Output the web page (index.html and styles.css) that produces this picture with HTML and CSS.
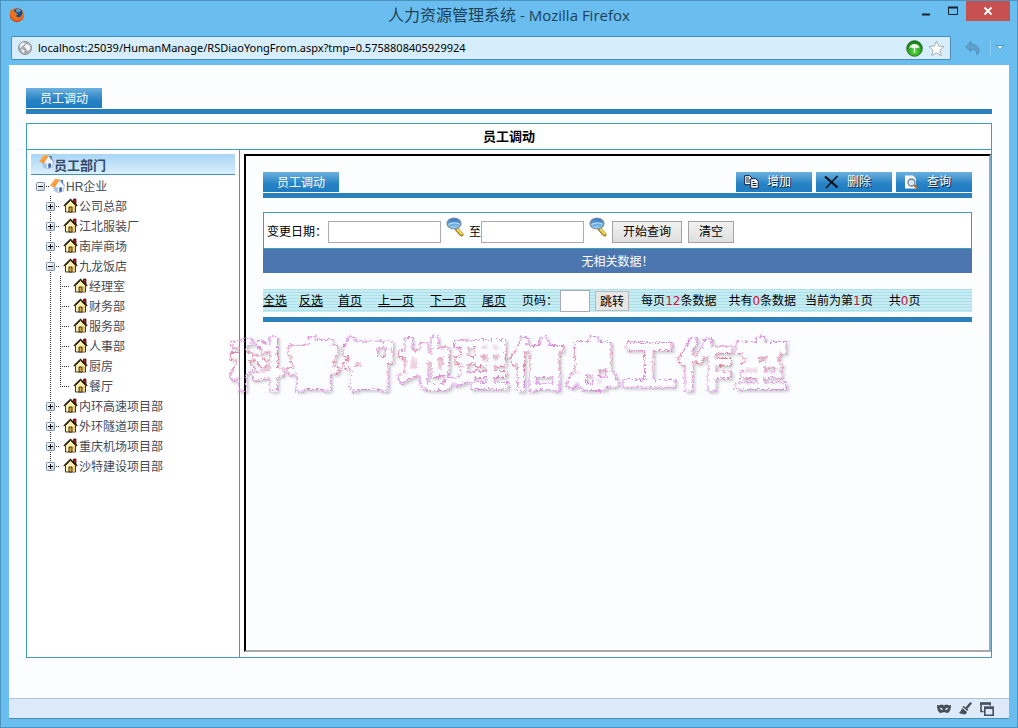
FILE: index.html
```html
<!DOCTYPE html>
<html lang="zh-CN">
<head>
  <meta charset="UTF-8" />
  <meta name="viewport" content="width=device-width, initial-scale=1.0"/>
  <title>人力资源管理系统</title>
  <link rel="stylesheet" href="styles.css">
</head>
<body>
  <svg class="defs" aria-hidden="true">
    <defs>
      <linearGradient id="orange" x1="0" y1="0" x2="1" y2="1">
        <stop offset="0" stop-color="#ffc070"/><stop offset="1" stop-color="#f07c10"/>
      </linearGradient>
      <linearGradient id="lens" x1="0" y1="0" x2="0" y2="1">
        <stop offset="0" stop-color="#2f6fb4"/><stop offset=".5" stop-color="#5ba3dc"/><stop offset="1" stop-color="#a5d8f5"/>
      </linearGradient>
      <linearGradient id="box" x1="0" y1="0" x2="1" y2="1">
        <stop offset="0" stop-color="#fff"/><stop offset="1" stop-color="#c3cad6"/>
      </linearGradient>
      <radialGradient id="green" cx=".5" cy=".7" r=".7">
        <stop offset="0" stop-color="#5be03c"/><stop offset="1" stop-color="#07780c"/>
      </radialGradient>
      <radialGradient id="fox" cx=".6" cy=".3" r=".8">
        <stop offset="0" stop-color="#ffb02e"/><stop offset=".6" stop-color="#e8601a"/><stop offset="1" stop-color="#b3270c"/>
      </radialGradient>

      <symbol id="i-house" viewBox="0 0 15 15">
        <path d="M10.500 1h2.500v6l-2.500-2.500z" fill="#a02020" stroke="#4a1010" stroke-width=".8"/>
        <path d="M2.500 7.500 7.500 2.500l5 5v6.500h-10z" fill="#fff0b0" stroke="#2a2010" stroke-width=".9"/>
        <path d="M9.500 8h2.500v5.500H9.500z" fill="#f3cf6c"/>
        <path d="M6 9h3v5H6z" fill="#d9b04a" stroke="#2a2010" stroke-width=".9"/>
        <path d="M.8 8 7.500 1.400 14.200 8" fill="none" stroke="#2a1c10" stroke-width="1.300"/>
      </symbol>

      <symbol id="i-home" viewBox="0 0 15 15">
        <path d="M4 7 9.500 2.200 14.200 7.500l-.7 5.500-5 1.800L4 12.500z" fill="#f3f7fd" stroke="#8fa6c8" stroke-width=".7"/>
        <path d="M4.200 8 8 9.800v4.600l-3.800-2z" fill="#a9c6ee"/>
        <path d="M9.300 9.500h2.600v3.800l-2.600.8z" fill="#2f61a8"/>
        <path d="M11 2h2v4l-2-1.800z" fill="#4a78b8"/>
        <path d="M0 7.500 5 .8 10 1.600 4.600 9.500z" fill="url(#orange)"/>
        <path d="M10 1.600 14.800 7.800" stroke="#7d9cc8" stroke-width="1"/>
      </symbol>

      <symbol id="i-plus" viewBox="0 0 9 9">
        <rect x=".5" y=".5" width="8" height="8" rx="1" fill="url(#box)" stroke="#7b8ea8"/>
        <path d="M2 4.500h5M4.500 2v5" stroke="#000"/>
      </symbol>

      <symbol id="i-minus" viewBox="0 0 9 9">
        <rect x=".5" y=".5" width="8" height="8" rx="1" fill="url(#box)" stroke="#7b8ea8"/>
        <path d="M2 4.500h5" stroke="#000"/>
      </symbol>

      <symbol id="i-lens" viewBox="0 0 18 20">
        <path d="M11 12.500 15.500 17.500" stroke="#9a7a1c" stroke-width="4" stroke-linecap="round"/>
        <path d="M11.500 12.500 15.500 17" stroke="#f3d95a" stroke-width="2.200" stroke-linecap="round"/>
        <ellipse cx="8" cy="6.500" rx="7" ry="5.500" fill="url(#lens)" stroke="#7c8b99" stroke-width="1.200"/>
        <path d="M2.500 7.500c3-2 8-2 11-.3" stroke="#cfeafa" stroke-width="1" fill="none"/>
      </symbol>

      <!-- paint of the watermark: rough outline and soft shadow -->
      <filter id="rough-outline" x="-5%" y="-20%" width="110%" height="140%" color-interpolation-filters="sRGB">
        <feMorphology in="SourceAlpha" operator="dilate" radius="2" result="fat"/>
        <feMorphology in="fat" operator="erode" radius="1" result="outer"/>
        <feMorphology in="fat" operator="erode" radius="2" result="inner"/>
        <feComposite in="outer" in2="inner" operator="out" result="ring"/>
        <feMorphology in="SourceGraphic" operator="dilate" radius="4" result="paint"/>
        <feComposite in="paint" in2="ring" operator="in" result="line"/>
        <feTurbulence type="fractalNoise" baseFrequency=".4" numOctaves="2" seed="4" result="noise"/>
        <feDisplacementMap in="line" in2="noise" scale="6" xChannelSelector="R" yChannelSelector="G" result="jag"/>
        <feGaussianBlur in="outer" stdDeviation="1.500" result="soft"/>
        <feOffset in="soft" dx="2" dy="2" result="moved"/>
        <feComposite in="moved" in2="outer" operator="out" result="edge"/>
        <feComponentTransfer in="edge" result="shadow"><feFuncA type="linear" slope=".2"/></feComponentTransfer>
        <feMerge><feMergeNode in="shadow"/><feMergeNode in="jag"/></feMerge>
      </filter>
    </defs>
  </svg>

  <div class="window">
    <header class="titlebar">
      <svg class="fox" width="16" height="16" viewBox="0 0 16 16" aria-hidden="true">
        <circle cx="8" cy="8" r="7.200" fill="url(#fox)"/>
        <path d="M5 3C7 .8 11 .8 13 3.500c1 2 .5 5-1.500 6.500-2 1-4.500.5-5-1L9 7 5.500 6z" fill="#1d4c86"/>
        <path d="M7 2.500c2-1 4-.5 5 1l-2 2-3-1z" fill="#4fa3d8"/>
        <path d="M1.500 2.500 5 4.500l2.500 1-1.500 2 2 2.500c2 1 4 0 5-2-.5 4-3.500 6-6.500 5.500S.5 9.500 1.500 2.500z" fill="#e9731c"/>
      </svg>
      <h1>人力资源管理系统<span> - Mozilla Firefox</span></h1>
      <div class="win-buttons">
        <button type="button" aria-label="最小化"><svg width="10" height="10" viewBox="0 0 10 10"><path d="M1 8.500h8" stroke="#17222c" stroke-width="2"/></svg></button>
        <button type="button" aria-label="最大化"><svg width="10" height="10" viewBox="0 0 10 10"><path d="M.5 1v7.500h9V1" fill="none" stroke="#17222c"/><path d="M0 1.500h10" stroke="#17222c" stroke-width="2"/></svg></button>
        <button type="button" class="close" aria-label="关闭"><svg width="10" height="10" viewBox="0 0 10 10"><path d="M1.500 1.500l7 7M8.500 1.500l-7 7" stroke="#fff" stroke-width="1.800"/></svg></button>
      </div>
    </header>

    <div class="navbar">
      <div class="address">
        <svg width="14" height="14" viewBox="0 0 14 14" aria-hidden="true">
          <circle cx="7" cy="7" r="6.500" fill="#a9adb1" stroke="#8f9498"/>
          <path d="M2 4c2-3 4-2.500 5-2l-1 2-2 1-1 2-1.500-1zM8.500 3l3 1 1 3-2 3-2-1-.5-2-2-1zM3 8l3 1 .5 3-2-.5z" fill="#f3f4f5"/>
        </svg>
        <input type="text" aria-label="地址" value="localhost:25039/HumanManage/RSDiaoYongFrom.aspx?tmp=0.5758808405929924">
        <svg width="17" height="17" viewBox="0 0 17 17" aria-hidden="true">
          <circle cx="8.500" cy="8.500" r="7.800" fill="url(#green)" stroke="#1f5c20" stroke-width=".8"/>
          <path d="M3.500 8.500c0-3 2-4.500 5-4.500s5 1.500 5 4.500l-2-1-1.300 1-1-1v5H7.800v-5l-1 1-1.300-1z" fill="#f2fff0"/>
        </svg>
        <svg width="17" height="17" viewBox="0 0 17 17" aria-hidden="true">
          <path d="M8.500 1l2.200 5 5.300.5-4 3.700 1.200 5.500-4.700-2.900-4.700 2.900L5 10.200 1 6.500 6.300 6z" fill="#fbfbfb" stroke="#a9aeb3"/>
        </svg>
      </div>
      <button type="button" class="back" aria-label="撤销">
        <svg width="15" height="14" viewBox="0 0 15 14"><path d="M6 .5v3c5 0 8 2.500 8 6 0 2-1 3.500-2.500 4 .8-3-1-5.500-5.500-5.500v3L.6 5.800z" fill="#62a2ca" stroke="#4888b2" stroke-width=".8"/></svg>
      </button>
      <button type="button" class="drop" aria-label="更多">
        <svg width="10" height="6" viewBox="0 0 10 6"><path d="M1.500.5h7L5 5z" fill="#e6f6ff" stroke="#4a98c6"/></svg>
      </button>
    </div>

    <main class="page">
      <div class="tabs">
        <span class="tab">员工调动</span>
      </div>

      <section class="frame">
        <h2>员工调动</h2>
        <div class="columns">
          <nav class="tree">
            <h3><svg width="15" height="15"><use href="#i-home"/></svg>员工部门</h3>
            <div class="node root">
              <button type="button" aria-label="收起"><svg width="9" height="9"><use href="#i-minus"/></svg></button>
              <svg width="15" height="15"><use href="#i-home"/></svg><a href="#">HR企业</a>
            </div>
            <ul class="level">
              <li class="node"><button type="button" aria-label="展开"><svg width="9" height="9"><use href="#i-plus"/></svg></button><svg width="15" height="15"><use href="#i-house"/></svg><a href="#">公司总部</a></li>
              <li class="node"><button type="button" aria-label="展开"><svg width="9" height="9"><use href="#i-plus"/></svg></button><svg width="15" height="15"><use href="#i-house"/></svg><a href="#">江北服装厂</a></li>
              <li class="node"><button type="button" aria-label="展开"><svg width="9" height="9"><use href="#i-plus"/></svg></button><svg width="15" height="15"><use href="#i-house"/></svg><a href="#">南岸商场</a></li>
              <li>
                <div class="node"><button type="button" aria-label="收起"><svg width="9" height="9"><use href="#i-minus"/></svg></button><svg width="15" height="15"><use href="#i-house"/></svg><a href="#">九龙饭店</a></div>
                <ul class="leaves">
                  <li class="node"><svg width="15" height="15"><use href="#i-house"/></svg><a href="#">经理室</a></li>
                  <li class="node"><svg width="15" height="15"><use href="#i-house"/></svg><a href="#">财务部</a></li>
                  <li class="node"><svg width="15" height="15"><use href="#i-house"/></svg><a href="#">服务部</a></li>
                  <li class="node"><svg width="15" height="15"><use href="#i-house"/></svg><a href="#">人事部</a></li>
                  <li class="node"><svg width="15" height="15"><use href="#i-house"/></svg><a href="#">厨房</a></li>
                  <li class="node"><svg width="15" height="15"><use href="#i-house"/></svg><a href="#">餐厅</a></li>
                </ul>
              </li>
              <li class="node"><button type="button" aria-label="展开"><svg width="9" height="9"><use href="#i-plus"/></svg></button><svg width="15" height="15"><use href="#i-house"/></svg><a href="#">内环高速项目部</a></li>
              <li class="node"><button type="button" aria-label="展开"><svg width="9" height="9"><use href="#i-plus"/></svg></button><svg width="15" height="15"><use href="#i-house"/></svg><a href="#">外环隧道项目部</a></li>
              <li class="node"><button type="button" aria-label="展开"><svg width="9" height="9"><use href="#i-plus"/></svg></button><svg width="15" height="15"><use href="#i-house"/></svg><a href="#">重庆机场项目部</a></li>
              <li class="node"><button type="button" aria-label="展开"><svg width="9" height="9"><use href="#i-plus"/></svg></button><svg width="15" height="15"><use href="#i-house"/></svg><a href="#">沙特建设项目部</a></li>
            </ul>
          </nav>

          <div class="panel">
            <div class="tabs">
              <span class="tab">员工调动</span>
              <div class="tools">
                <button type="button">
                  <svg width="15" height="14" viewBox="0 0 15 14"><path d="M.7.700h5l2 2v7h-7z" fill="#fff" stroke="#0c1c3c"/><path d="M2 3h3M2 5h4M2 7h4" stroke="#0c1c3c"/><path d="M6.700 3.700h5l2.500 2.500v7H6.700z" fill="#fff" stroke="#0c1c3c"/><path d="M8.500 6.500h2M8.500 8.500h4M8.500 10.500h4" stroke="#0c1c3c"/></svg>
                  增加
                </button>
                <button type="button">
                  <svg width="15" height="14" viewBox="0 0 15 14"><path d="M1 1.500 13.500 12.500" stroke="#06101c" stroke-width="2.200"/><path d="M13.500 1 2 13" stroke="#06101c" stroke-width="1.500"/></svg>
                  删除
                </button>
                <button type="button">
                  <svg width="15" height="14" viewBox="0 0 15 14"><path d="M1 .5h8l3 3v10H1z" fill="#fff"/><circle cx="7.500" cy="7.500" r="3.500" fill="#d5e8f5" stroke="#6c7f90" stroke-width="1.300"/><path d="M10.200 10.200l3.300 3" stroke="#b06a34" stroke-width="2.500"/></svg>
                  查询
                </button>
              </div>
            </div>

            <form class="query">
              <label for="from">变更日期：</label>
              <input type="text" id="from" class="from">
              <button type="button" class="pick" aria-label="选择开始日期"><svg width="18" height="20"><use href="#i-lens"/></svg></button>
              <label for="to">至</label>
              <input type="text" id="to" class="to">
              <button type="button" class="pick" aria-label="选择结束日期"><svg width="18" height="20"><use href="#i-lens"/></svg></button>
              <button type="button" class="btn">开始查询</button>
              <button type="reset" class="btn">清空</button>
            </form>
            <p class="empty">无相关数据！</p>

            <div class="pager">
              <div class="links">
                <a href="#">全选</a>
                <a href="#">反选</a>
              </div>
              <div class="links wide">
                <a href="#">首页</a>
                <a href="#">上一页</a>
                <a href="#">下一页</a>
                <a href="#">尾页</a>
                <label for="pageno">页码：</label>
              </div>
              <input type="text" id="pageno">
              <button type="button">跳转</button>
              <div class="counts">
                <span>每页<b>12</b>条数据</span>
                <span>共有<b>0</b>条数据</span>
              </div>
              <div class="counts pages">
                <span>当前为第<b>1</b>页</span>
                <span>共<b>0</b>页</span>
              </div>
            </div>
          </div>
        </div>
      </section>
    </main>

    <footer class="statusbar">
      <svg width="14" height="10" viewBox="0 0 14 10" aria-hidden="true"><path fill-rule="evenodd" d="M0 1c2 1 3-.5 5-.5L7 1.500 9 .500c2 0 3 1.500 5 .5 0 3-.5 7-3.500 8C9 9.200 8 8 7 8S5 9.200 3.500 9C.5 8 0 4 0 1zM2.500 4.500c1 1.500 3 1.500 3.500 1-.5-1.500-2-2-3.500-1zM8 5.500c.5.500 2.500.5 3.500-1-1.500-1-3-.5-3.500 1z" fill="#454f59"/></svg>
      <svg width="13" height="13" viewBox="0 0 13 13" aria-hidden="true"><path d="M11.500 1.500 8 5.500" stroke="#454f59" stroke-width="2.400" stroke-linecap="round"/><path d="M4.500 3.800l5 4-1 1.300-5-4z" fill="#454f59"/><path d="M3 6l5 4-1.500 2.500-1.500-.5-.5.800-1.300-1.300-.7.700L0 10.500C1.500 9.500 2.500 8 3 6z" fill="#454f59"/></svg>
      <svg width="14" height="14" viewBox="0 0 14 14" aria-hidden="true"><path d="M3.500 9.500H1V1.500h9v2" fill="none" stroke="#454f59" stroke-width="1.600"/><path d="M0 1.500h11" stroke="#454f59" stroke-width="2.500"/><path d="M4.800 5.500h8.400v7.700H4.800z" fill="#dceafa" stroke="#454f59" stroke-width="1.600"/><path d="M4 5.700h10" stroke="#454f59" stroke-width="2.500"/></svg>
    </footer>
  </div>

  <div class="watermark"><span>科睿智地理信息工作室</span></div>
</body>
</html>
```

FILE: styles.css
```css
* {
  box-sizing: border-box;
  margin: 0;
  padding: 0;
}

body {
  font-family: 'DejaVu Sans', 'Noto Sans CJK SC', sans-serif;
  font-size: 12px;
  line-height: 20px;
  color: #000;
}

button,
input {
  font: inherit;
  color: inherit;
}

button {
  border: none;
  background: none;
}

ul {
  list-style: none;
}

svg {
  display: block;
  flex: none;
}

.defs {
  position: absolute;
  width: 0;
  height: 0;
}

/* browser window */
.window {
  display: flex;
  flex-direction: column;
  min-height: 100vh;
  padding: 0 8px 8px;
  background: #6abeef;
  border: 1px solid #4a94be;
}

.titlebar {
  display: grid;
  grid-template-columns: 1fr auto 1fr;
  height: 35px;
}

.titlebar h1 {
  font: normal 16px/28px 'Open Sans', 'Noto Sans CJK SC', sans-serif;
  color: #1d4257;
}

.titlebar h1 span {
  font-size: 15px;
}

.fox {
  margin-top: 6px;
}

.win-buttons {
  display: flex;
  justify-content: flex-end;
  margin-right: -1px;
}

.win-buttons button {
  display: flex;
  align-items: center;
  justify-content: center;
  width: 27px;
  height: 20px;
}

.win-buttons .close {
  width: 44px;
  background: #c75050;
}

.navbar {
  display: flex;
  align-items: center;
  height: 29px;
  padding: 0 0 5px 2px;
}

.address {
  display: flex;
  align-items: center;
  gap: 5px;
  flex: 1;
  height: 24px;
  padding: 0 5px 0 6px;
  background: #d6edfb;
  border: 1px solid #4a8db5;
  border-radius: 2px;
}

.address input {
  flex: 1;
  min-width: 0;
  padding-left: 1px;
  border: none;
  background: none;
  font-family: 'Noto Sans', sans-serif;
  font-size: 11px;
}

.back {
  margin: 0 10px 0 14px;
}

.drop {
  padding: 5px 4px;
  border-left: 1px solid #85caf2;
}

/* page */
.page {
  display: flex;
  flex-direction: column;
  flex: 1;
  padding: 23px 17px 40px 16px;
  background: #fcfdff;
  border-left: 1px solid #fff;
}

.tabs {
  display: flex;
  align-items: flex-end;
  justify-content: space-between;
  border-bottom: 5px solid #2a7fbd;
}

.tab {
  width: 76px;
  height: 21px;
  line-height: 22px;
  text-align: center;
  color: #fff;
  background: linear-gradient(#6cb1df, #2682c4 60%, #1f7cc2);
  border-bottom: 1px solid #fff;
}

.page > .tabs {
  margin-bottom: 9px;
}

.frame {
  display: flex;
  flex-direction: column;
  flex: 1;
  background: #fff;
  border: 1px solid #3f9fb8;
}

.frame h2 {
  font-size: 13px;
  line-height: 24px;
  padding-top: 1px;
  text-align: center;
  border-bottom: 1px solid #3f9fb8;
}

.columns {
  display: flex;
  flex: 1;
}

/* department tree */
.tree {
  width: 213px;
  padding: 4px 4px 0;
  border-right: 1px solid #3f9fb8;
}

.tree h3 {
  display: flex;
  height: 21px;
  margin-bottom: 1px;
  padding-left: 8px;
  font-size: 13px;
  line-height: 24px;
  color: #33496a;
  background: linear-gradient(#a9d5f5, #d9effc);
  border-bottom: 1px solid #4a8fbd;
}

.tree a {
  color: #454a54;
  text-decoration: none;
}

.node {
  display: flex;
  align-items: center;
  height: 20px;
}

.node > svg {
  margin-bottom: 2px;
}

.node a {
  padding: 2px 0 0 1px;
}

/* dotted stub between the toggle and the icon */
.node button {
  padding-right: 8px;
  background: repeating-linear-gradient(90deg, #333 0 1px, transparent 1px 2px) 10px 50% / 4px 1px no-repeat;
}

.root {
  font-family: 'Liberation Sans', 'Noto Sans CJK SC', sans-serif;
  padding-left: 5px;
}

.root button {
  padding-right: 5px;
}

.level {
  margin-left: 15px;
  background: repeating-linear-gradient(#333 0 1px, transparent 1px 2px) 4px 0 / 1px calc(100% - 10px) no-repeat;
}

.leaves {
  margin-left: 14px;
  background: repeating-linear-gradient(#333 0 1px, transparent 1px 2px) 0 0 / 1px calc(100% - 10px) no-repeat;
}

.leaves .node {
  padding-left: 13px;
  background: repeating-linear-gradient(90deg, #333 0 1px, transparent 1px 2px) 0 50% / 9px 1px no-repeat;
}

/* right panel */
.panel {
  flex: 1;
  min-width: 0;
  margin: 4px 0 5px 4px;
  padding: 16px 17px;
  background: #fcfdff;
  border: 2px solid #000;
  border-right-color: #7fb2cb;
  border-bottom-color: #aaa;
}

.tools {
  display: flex;
  gap: 4px;
}

.tools button {
  display: flex;
  align-items: center;
  gap: 8px;
  width: 76px;
  height: 21px;
  padding-left: 8px;
  color: #fff;
  text-shadow: 1px 1px 0 #0b2038;
  background: linear-gradient(#6cb1df, #2682c4 60%, #1f7cc2);
  border-bottom: 1px solid #fff;
}

.query {
  display: flex;
  align-items: center;
  height: 37px;
  margin-top: 14px;
  padding: 2px 3px 0;
  background: #fff;
  border: 1px solid #3f9fb8;
}

.query input {
  height: 22px;
  border: 1px solid #a9abb3;
}

.query .from {
  width: 113px;
  margin-left: 1px;
}

.query .to {
  width: 103px;
}

.pick {
  align-self: flex-start;
  margin: 2px 5px 0;
}

.btn {
  height: 22px;
  margin-right: 6px;
  padding: 0 10px;
  background: linear-gradient(#f2f2f2, #dfdfdf);
  border: 1px solid #a3a3a3;
}

.empty {
  height: 24px;
  line-height: 27px;
  text-align: center;
  color: #fff;
  background: #4b76b0;
}

.pager {
  display: flex;
  align-items: center;
  height: 33px;
  margin-top: 16px;
  padding-bottom: 4px;
  background: repeating-linear-gradient(#abe0eb 0 1px, #c6ecf4 1px 3px) 0 0 / 100% 23px no-repeat;
  border-bottom: 5px solid #2a7fbd;
}

.links,
.counts {
  display: flex;
  gap: 12px;
  white-space: nowrap;
}

.links a {
  color: #000;
}

.links.wide {
  gap: 16px;
  margin-left: 15px;
}

.pager input {
  width: 30px;
  height: 22px;
  margin-left: 2px;
  border: 1px solid #a9abb3;
}

.pager button {
  width: 34px;
  height: 20px;
  margin: 0 12px 0 5px;
  background: #e6e6e6;
  border: 1px solid #b9b9b9;
}

.counts b {
  font-weight: normal;
  color: #d0103a;
}

.pages {
  gap: 16px;
  margin-left: 9px;
}

.statusbar {
  display: flex;
  align-items: center;
  justify-content: flex-end;
  gap: 8px;
  height: 21px;
  padding-right: 15px;
  background: #dceafa;
  border-top: 1px solid #b0c4d8;
  border-bottom: 1px solid #4a8db5;
}

/* watermark lies over the whole page */
.watermark {
  position: absolute;
  top: 321px;
  left: 0;
  right: 0;
  text-align: center;
  filter: url(#rough-outline);
  pointer-events: none;
}

.watermark span {
  font: bold 56px/80px 'Noto Sans CJK SC', sans-serif;
  color: transparent;
  background: linear-gradient(#da90e0 25%, #e88088 50%, #da90e0 75%);
  -webkit-background-clip: text;
  background-clip: text;
}
```
